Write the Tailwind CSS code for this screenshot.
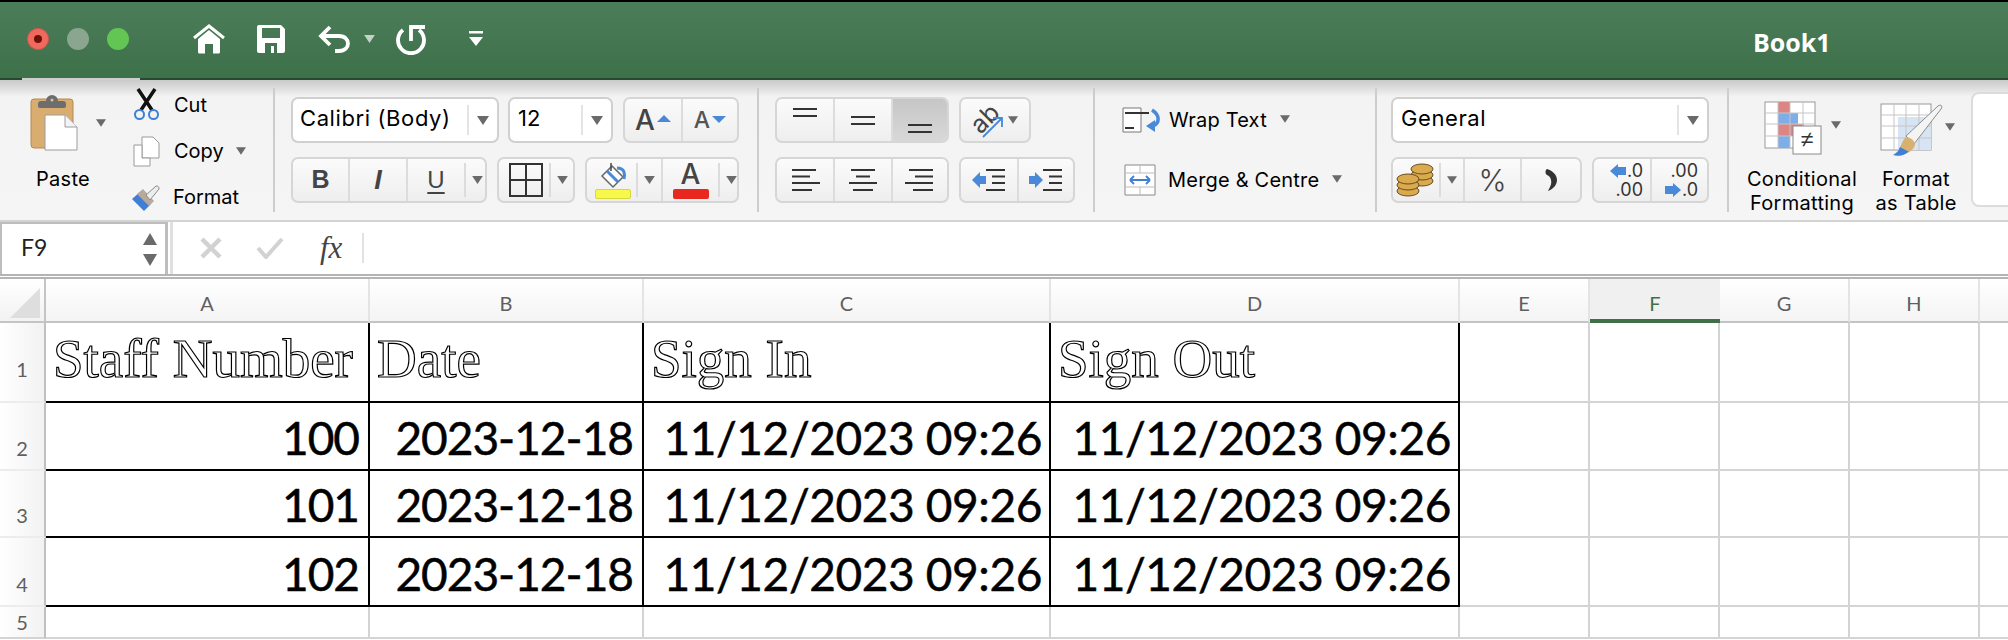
<!DOCTYPE html>
<html lang="en">
<head>
<meta charset="UTF-8">
<title>Book1</title>
<script src="https://cdn.jsdelivr.net/npm/@tailwindcss/browser@4"></script>
</head>
<body class="w-[2008px] h-[640px] overflow-hidden bg-white font-['Inter',sans-serif] text-black">

<svg class="hidden">
  <symbol id="caret" viewBox="0 0 12 9"><polygon points="0,0 12,0 6,9" fill="#6a6a6a"/></symbol>
</svg>

<!-- title bar -->
<div class="h-[80px] bg-black pt-[2px]">
  <div class="relative h-[78px] flex items-center bg-linear-to-b from-[#4c7d5a] to-[#3d7149] border-b-2 border-[#28482f]">
    <div class="flex items-center gap-[18px] ml-[27px] mb-[2px]">
      <span class="w-[22px] h-[22px] rounded-full bg-[#ef6a5e] border border-[#d9534a] flex items-center justify-center"><span class="w-[8px] h-[8px] rounded-full bg-[#6f0f08]"></span></span>
      <span class="w-[22px] h-[22px] rounded-full bg-[#8aa590]"></span>
      <span class="w-[22px] h-[22px] rounded-full bg-[#62c554]"></span>
    </div>
    <div class="flex items-center ml-[63px] mb-[2px]">
      <svg class="w-[34px] h-[30px]" viewBox="0 0 34 30"><polyline points="2,14 17,2 32,14" fill="none" stroke="#fff" stroke-width="3"/><path d="M6 15 L17 6 L28 15 V28 a1.500 1.500 0 0 1 -1.500 1.500 H21 V20 H13 V29.500 H7.500 A1.500 1.500 0 0 1 6 28 Z" fill="#fff"/></svg>
      <svg class="w-[28px] h-[28px] ml-[31px]" viewBox="0 0 28 28"><path d="M2 0 H24 L28 4 V26 a2 2 0 0 1 -2 2 H2 a2 2 0 0 1 -2 -2 V2 a2 2 0 0 1 2 -2 Z M5 3 V13 H23 V3 Z M8 28 H20 V18 H8 Z" fill="#fff" fill-rule="evenodd"/><rect x="14" y="21" width="3" height="7" fill="#fff"/></svg>
      <svg class="w-[32px] h-[28px] ml-[33px]" viewBox="0 0 32 28"><path d="M12 2 L3 11 L12 20 M3 11 H21 C33 11 33 26 21 26 H17" fill="none" stroke="#fff" stroke-width="3.800"/></svg>
      <svg class="w-[11px] h-[8px] ml-[14px]" viewBox="0 0 12 9"><polygon points="0,0 12,0 6,9" fill="#c3d2c8"/></svg>
      <svg class="w-[32px] h-[32px] ml-[20px]" viewBox="0 0 32 32"><path d="M8 7 A13 13 0 1 0 24 7" fill="none" stroke="#fff" stroke-width="3.800"/><path d="M16 18 V4 H30" fill="none" stroke="#fff" stroke-width="3.800"/></svg>
      <svg class="w-[16px] h-[16px] ml-[41px]" viewBox="0 0 16 16"><rect x="1" y="0" width="14" height="2.500" fill="#fff"/><polygon points="1,6 15,6 8,15" fill="#fff"/></svg>
    </div>
    <div class="absolute left-[1753px] top-[26px] text-[25px] leading-[28px] font-bold text-white font-['Open_Sans',sans-serif]">Book1</div>
    <div class="absolute left-[22px] -bottom-[2px] w-[118px] h-[2px] bg-[#cfcfcf]"></div>
  </div>
</div>

<!-- ribbon -->
<div class="h-[140px] flex bg-linear-to-b from-[#c9c9c9] via-[#f3f3f3] via-[12%] to-[#f5f5f5] text-[20px] overflow-hidden">
  <!-- clipboard -->
  <div class="w-[273px] flex">
    <div class="w-[128px] pl-[30px] pt-[13px]">
      <div class="flex items-center">
        <svg class="w-[48px] h-[58px]" viewBox="0 0 48 58"><rect x="1" y="6" width="42" height="49" rx="3" fill="#d9ad70" stroke="#b58a50"/><path d="M8 11 a3 3 0 0 1 3 -3 h5 a6 6 0 0 1 12 0 h5 a3 3 0 0 1 3 3 v2 a2 2 0 0 1 -2 2 H10 a2 2 0 0 1 -2 -2 Z" fill="#6d6d6d"/><circle cx="22" cy="7" r="1.500" fill="#e6c088"/><path d="M15 22 H35 L47 34 V57 H15 Z" fill="#fff" stroke="#9c9c9c"/><path d="M35 22 V34 H47" fill="#f3f3f3" stroke="#9c9c9c"/></svg>
        <svg class="w-[10px] h-[8px] ml-[18px] mt-[2px]"><use href="#caret"/></svg>
      </div>
      <div class="mt-[16px] ml-[6px] leading-[24px] tracking-[0.3px]">Paste</div>
    </div>
    <div class="flex flex-col pt-[8px] ml-[5px]">
      <div class="h-[33px] flex items-center mb-[7px]">
        <svg class="w-[27px] h-[33px]" viewBox="0 0 27 33"><path d="M5 1 L19 22 M22 1 L8 22" stroke="#111" stroke-width="3.500" fill="none"/><circle cx="6.500" cy="26.500" r="4.500" fill="none" stroke="#3f7fd6" stroke-width="2"/><circle cx="20.500" cy="26.500" r="4.500" fill="none" stroke="#3f7fd6" stroke-width="2"/></svg>
        <span class="ml-[14px]">Cut</span>
      </div>
      <div class="h-[46px] flex items-center">
        <svg class="w-[27px] h-[31px]" viewBox="0 0 27 31"><path d="M9 1 H20 L26 7 V22 H9 Z" fill="#fff" stroke="#9a9a9a"/><path d="M1 9 H9 V22 H17 V30 H1 Z" fill="#fff" stroke="#9a9a9a"/></svg>
        <span class="ml-[14px]">Copy</span>
        <svg class="w-[10px] h-[8px] ml-[12px]"><use href="#caret"/></svg>
      </div>
      <div class="h-[46px] flex items-center -ml-[3px]">
        <svg class="w-[32px] h-[30px]" viewBox="0 0 32 30"><path d="M2 17 L14 29 L21 22 L10 10 Z" fill="#3f7fd6"/><path d="M7 12 L19 24 L24 19 L13 7 Z" fill="#b7aa9a"/><path d="M16 13 L26 4 a2.500 2.500 0 0 1 3 3 L20 18 Z" fill="#ededed" stroke="#8a8a8a"/></svg>
        <span class="ml-[11px]">Format</span>
      </div>
    </div>
  </div>
  <div class="w-[2px] h-[124px] mt-[8px] bg-[#cdcdcd]"></div>

  <!-- font -->
  <div class="w-[482px] pl-[16px] pt-[17px] flex flex-col gap-[14px]">
    <div class="flex h-[46px]">
      <div class="w-[208px] bg-white border-2 border-[#d0d0d0] rounded-[7px] flex items-center pl-[7px] text-[22px] tracking-[0.6px]">
        <span class="flex-1 whitespace-nowrap mb-[3px]">Calibri (Body)</span>
        <span class="w-[2px] h-[30px] bg-[#e4e4e4]"></span>
        <svg class="w-[12px] h-[9px] mx-[8px]"><use href="#caret"/></svg>
      </div>
      <div class="w-[105px] ml-[9px] bg-white border-2 border-[#d0d0d0] rounded-[7px] flex items-center pl-[8px] text-[22px]">
        <span class="flex-1 mb-[3px]">12</span>
        <span class="w-[2px] h-[30px] bg-[#e4e4e4]"></span>
        <svg class="w-[12px] h-[9px] mx-[8px]"><use href="#caret"/></svg>
      </div>
      <div class="w-[116px] ml-[10px] border-2 border-[#d6d6d6] rounded-[7px] bg-linear-to-b from-[#fbfbfb] to-[#eeeeee] flex">
        <div class="w-[58px] border-r-2 border-[#dcdcdc] flex items-center justify-center gap-[2px] text-[#444]"><span class="text-[28px] font-medium">A</span><svg class="w-[14px] h-[7px] mb-[4px]" viewBox="0 0 14 7"><polygon points="7,0 14,7 0,7" fill="#4a88d8"/></svg></div>
        <div class="flex-1 flex items-center justify-center gap-[2px] text-[#555]"><span class="text-[23px] font-medium">A</span><svg class="w-[14px] h-[7px] mb-[2px]" viewBox="0 0 14 7"><polygon points="0,0 14,0 7,7" fill="#4a88d8"/></svg></div>
      </div>
    </div>
    <div class="flex h-[46px]">
      <div class="w-[196px] border-2 border-[#d6d6d6] rounded-[7px] bg-linear-to-b from-[#fbfbfb] to-[#eeeeee] flex items-center text-[#444]">
        <div class="w-[57px] h-full border-r-2 border-[#dcdcdc] flex items-center justify-center text-[25px] font-bold font-['Liberation_Sans',sans-serif]">B</div>
        <div class="w-[58px] h-full border-r-2 border-[#dcdcdc] flex items-center justify-center text-[27px] italic font-['Liberation_Sans',sans-serif] font-semibold">I</div>
        <div class="w-[56px] flex items-center justify-center text-[24px] underline underline-offset-[4px] font-['Liberation_Sans',sans-serif]">U</div>
        <span class="w-[2px] h-[34px] bg-[#dcdcdc]"></span>
        <svg class="w-[11px] h-[8px] ml-[6px]"><use href="#caret"/></svg>
      </div>
      <div class="w-[78px] ml-[10px] border-2 border-[#d6d6d6] rounded-[7px] bg-linear-to-b from-[#fbfbfb] to-[#eeeeee] flex items-center">
        <svg class="w-[34px] h-[34px] ml-[10px]" viewBox="0 0 34 34"><path d="M1 1 H33 V33 H1 Z M17 1 V33 M1 17 H33" fill="none" stroke="#333" stroke-width="2"/></svg>
        <span class="w-[2px] h-[34px] ml-[6px] bg-[#dcdcdc]"></span>
        <svg class="w-[11px] h-[8px] ml-[6px]"><use href="#caret"/></svg>
      </div>
      <div class="w-[154px] ml-[10px] border-2 border-[#d6d6d6] rounded-[7px] bg-linear-to-b from-[#fbfbfb] to-[#eeeeee] flex items-center">
        <div class="w-[48px] pl-[3px] flex flex-col items-center">
          <svg class="w-[28px] h-[27px]" viewBox="0 0 28 27"><path d="M13 4 L24 15 L14 25 L3 14 Z" fill="#fff" stroke="#666" stroke-width="1.500"/><path d="M8 9 L19 20" stroke="#4a88d8" stroke-width="3"/><path d="M12 1 V9" stroke="#444" stroke-width="1.500"/><path d="M18 6 C26 6 26 12 25 17" fill="none" stroke="#4a88d8" stroke-width="3"/></svg>
          <span class="w-[36px] h-[10px] bg-[#f8f84a] border border-[#d8d83c] rounded-[2px]"></span>
        </div>
        <span class="w-[2px] h-[34px] ml-[1px] bg-[#dcdcdc]"></span>
        <svg class="w-[11px] h-[8px] ml-[6px]"><use href="#caret"/></svg>
        <span class="w-[2px] h-full ml-[6px] bg-[#dcdcdc]"></span>
        <div class="w-[55px] flex flex-col items-center">
          <span class="text-[28px] leading-[25px] text-[#444] font-medium">A</span>
          <span class="w-[36px] h-[10px] mt-[2px] bg-[#e8281e] rounded-[2px]"></span>
        </div>
        <span class="w-[2px] h-[34px] bg-[#dcdcdc]"></span>
        <svg class="w-[11px] h-[8px] ml-[6px]"><use href="#caret"/></svg>
      </div>
    </div>
  </div>
  <div class="w-[2px] h-[124px] mt-[8px] bg-[#cdcdcd]"></div>

  <!-- alignment -->
  <div class="w-[334px] pl-[16px] pt-[17px] flex">
    <div class="flex flex-col gap-[14px]">
      <div class="flex h-[46px]">
        <div class="w-[174px] border-2 border-[#d6d6d6] rounded-[7px] bg-linear-to-b from-[#fbfbfb] to-[#eeeeee] flex overflow-hidden">
          <div class="w-[58px] border-r-2 border-[#dcdcdc] pt-[9px] flex justify-center"><svg class="w-[24px] h-[9px]" viewBox="0 0 24 9"><path d="M0 1 H24 M0 8 H24" stroke="#333" stroke-width="2"/></svg></div>
          <div class="w-[58px] border-r-2 border-[#dcdcdc] flex items-center justify-center"><svg class="w-[24px] h-[9px]" viewBox="0 0 24 9"><path d="M0 1 H24 M0 8 H24" stroke="#333" stroke-width="2"/></svg></div>
          <div class="flex-1 bg-linear-to-b from-[#c6c6c6] to-[#d8d8d8] pt-[25px] flex justify-center"><svg class="w-[24px] h-[9px]" viewBox="0 0 24 9"><path d="M0 1 H24 M0 8 H24" stroke="#333" stroke-width="2"/></svg></div>
        </div>
        <div class="relative w-[72px] ml-[10px] border-2 border-[#d6d6d6] rounded-[7px] bg-linear-to-b from-[#fbfbfb] to-[#eeeeee] flex items-center">
          <span class="w-[38px] ml-[9px] text-[25px] leading-[25px] text-[#444] -rotate-45 -translate-y-[5px] -translate-x-[1px]">ab</span>
          <svg class="absolute left-[21px] top-[17px] w-[22px] h-[22px]" viewBox="0 0 22 22"><path d="M1 21 L20 2 M11 2 H20 V11" fill="none" stroke="#4a88d8" stroke-width="1.800"/></svg>
          <svg class="w-[10px] h-[8px] ml-[0px]"><use href="#caret"/></svg>
        </div>
      </div>
      <div class="flex h-[46px]">
        <div class="w-[174px] border-2 border-[#d6d6d6] rounded-[7px] bg-linear-to-b from-[#fbfbfb] to-[#eeeeee] flex">
          <div class="w-[58px] border-r-2 border-[#dcdcdc] flex items-center justify-center"><svg class="w-[30px] h-[24px]" viewBox="0 0 30 24"><path d="M2 2 H26 M2 8.500 H20 M2 15 H30 M2 22 H22" stroke="#333" stroke-width="2"/></svg></div>
          <div class="w-[58px] border-r-2 border-[#dcdcdc] flex items-center justify-center"><svg class="w-[30px] h-[24px]" viewBox="0 0 30 24"><path d="M3 2 H27 M8 8.500 H22 M1 15 H29 M5 22 H25" stroke="#333" stroke-width="2"/></svg></div>
          <div class="flex-1 flex items-center justify-center"><svg class="w-[30px] h-[24px]" viewBox="0 0 30 24"><path d="M4 2 H28 M10 8.500 H28 M0 15 H28 M8 22 H28" stroke="#333" stroke-width="2"/></svg></div>
        </div>
        <div class="w-[116px] ml-[10px] border-2 border-[#d6d6d6] rounded-[7px] bg-linear-to-b from-[#fbfbfb] to-[#eeeeee] flex">
          <div class="w-[58px] border-r-2 border-[#dcdcdc] flex items-center justify-center"><svg class="w-[34px] h-[24px]" viewBox="0 0 34 24"><polygon points="0,12 8,4 8,8 14,8 14,16 8,16 8,20" fill="#4a88d8"/><path d="M14 2 H33 M20 8.500 H33 M20 15 H33 M14 22 H33" stroke="#333" stroke-width="2"/></svg></div>
          <div class="flex-1 flex items-center justify-center"><svg class="w-[34px] h-[24px]" viewBox="0 0 34 24"><polygon points="14,12 6,4 6,8 0,8 0,16 6,16 6,20" fill="#4a88d8"/><path d="M14 2 H33 M20 8.500 H33 M20 15 H33 M14 22 H33" stroke="#333" stroke-width="2"/></svg></div>
        </div>
      </div>
    </div>
  </div>
  <div class="w-[2px] h-[124px] mt-[8px] bg-[#cdcdcd]"></div>

  <!-- wrap and merge -->
  <div class="w-[280px] pt-[17px] pl-[27px] flex flex-col gap-[14px]">
    <div class="h-[46px] flex items-center">
      <svg class="w-[40px] h-[26px]" viewBox="0 0 40 26"><path d="M1 1 H19 V25 H1 Z" fill="#fff" stroke="#777"/><path d="M3 6 H27 M3 21 H12" stroke="#333" stroke-width="2"/><path d="M30 3 C38 8 38 16 31 19" fill="none" stroke="#4a88d8" stroke-width="3.500"/><polygon points="24,19 33,13 33,25" fill="#4a88d8"/></svg>
      <span class="ml-[7px] tracking-[0.2px]">Wrap Text</span>
      <svg class="w-[10px] h-[8px] ml-[13px] -mt-[3px]"><use href="#caret"/></svg>
    </div>
    <div class="h-[46px] flex items-center">
      <svg class="w-[32px] h-[32px] ml-[2px]" viewBox="0 0 32 32"><path d="M1 1 H31 V31 H1 Z" fill="#fff" stroke="#888"/><path d="M1 9 H31 M1 23 H31 M16 1 V9 M16 23 V31" stroke="#bbb"/><path d="M6 16 H26 M6 16 L10 12 M6 16 L10 20 M26 16 L22 12 M26 16 L22 20" fill="none" stroke="#3f7fd6" stroke-width="1.800"/></svg>
      <span class="ml-[12px] tracking-[0.2px] whitespace-nowrap">Merge &amp; Centre</span>
      <svg class="w-[10px] h-[8px] ml-[13px] -mt-[2px]"><use href="#caret"/></svg>
    </div>
  </div>
  <div class="w-[2px] h-[124px] mt-[8px] bg-[#cdcdcd]"></div>

  <!-- number -->
  <div class="w-[350px] pl-[14px] pt-[17px] flex flex-col gap-[14px]">
    <div class="w-[318px] h-[46px] bg-white border-2 border-[#d0d0d0] rounded-[7px] flex items-center pl-[8px] text-[22px] tracking-[0.6px]">
      <span class="flex-1 mb-[3px]">General</span>
      <span class="w-[2px] h-[30px] bg-[#e4e4e4]"></span>
      <svg class="w-[12px] h-[9px] mx-[8px]"><use href="#caret"/></svg>
    </div>
    <div class="flex h-[46px]">
      <div class="w-[191px] border-2 border-[#d6d6d6] rounded-[7px] bg-linear-to-b from-[#fbfbfb] to-[#eeeeee] flex items-center">
        <svg class="w-[38px] h-[36px] ml-[3px]" viewBox="0 0 38 36"><g fill="#d9ab4e" stroke="#6b4a20"><ellipse cx="26" cy="19" rx="11" ry="5"/><ellipse cx="26" cy="13" rx="11" ry="5"/><ellipse cx="26" cy="7" rx="11" ry="5"/><ellipse cx="12" cy="29" rx="11" ry="5"/><ellipse cx="12" cy="23" rx="11" ry="5"/><ellipse cx="12" cy="17" rx="11" ry="5"/></g></svg>
        <span class="w-[2px] h-[34px] ml-[5px] bg-[#dcdcdc]"></span>
        <svg class="w-[10px] h-[8px] ml-[6px]"><use href="#caret"/></svg>
        <span class="w-[2px] h-full ml-[6px] bg-[#dcdcdc]"></span>
        <div class="w-[57px] h-full border-r-2 border-[#dcdcdc] flex items-center justify-center text-[30px] font-light text-[#444]">%</div>
        <div class="flex-1 flex items-center justify-center"><svg class="w-[12px] h-[24px]" viewBox="0 0 12 24"><path d="M2 1 C8 3 12 7 12 12 C12 17 8 21 3 23 C5 19 7 16 6 12 C5.500 9 4 8 2 7 C0 6 0 2 2 1 Z" fill="#333"/></svg></div>
      </div>
      <div class="w-[117px] ml-[10px] border-2 border-[#d6d6d6] rounded-[7px] bg-linear-to-b from-[#fbfbfb] to-[#eeeeee] flex text-[18px] leading-[19px] text-[#333]">
        <div class="w-[58px] border-r-2 border-[#dcdcdc] flex flex-col items-end justify-center pr-[7px]">
          <div class="flex items-center"><svg class="w-[16px] h-[14px] mr-[1px]" viewBox="0 0 16 14"><polygon points="0,7 8,0 8,3 16,3 16,11 8,11 8,14" fill="#4a88d8"/></svg>.0</div>
          <div>.00</div>
        </div>
        <div class="flex-1 flex flex-col items-end justify-center pr-[9px]">
          <div>.00</div>
          <div class="flex items-center"><svg class="w-[16px] h-[14px] mr-[1px]" viewBox="0 0 16 14"><polygon points="16,7 8,0 8,3 0,3 0,11 8,11 8,14" fill="#4a88d8"/></svg>.0</div>
        </div>
      </div>
    </div>
  </div>
  <div class="w-[2px] h-[124px] mt-[8px] bg-[#cdcdcd]"></div>

  <!-- styles -->
  <div class="flex-1 flex relative">
    <div class="w-[146px] pt-[21px] flex flex-col items-center">
      <div class="flex items-center">
        <svg class="w-[58px] h-[54px]" viewBox="0 0 58 54"><rect x="1" y="1" width="50" height="46" fill="#fff" stroke="#999"/><rect x="14" y="1" width="12" height="11" fill="#dc8585"/><rect x="14" y="12" width="20" height="11" fill="#7eaee8"/><rect x="14" y="23" width="26" height="12" fill="#dc8585"/><rect x="14" y="35" width="12" height="12" fill="#7eaee8"/><path d="M1 12 H51 M1 23 H51 M1 35 H51 M14 1 V47 M26 1 V47 M39 1 V47" stroke="#c5c5c5" fill="none"/><rect x="29" y="25" width="28" height="28" fill="#fff" stroke="#8a8a8a"/><text x="43" y="46" font-size="23" text-anchor="middle" fill="#333" font-family="Liberation Sans">≠</text></svg>
        <svg class="w-[10px] h-[8px] ml-[9px] -mt-[6px]"><use href="#caret"/></svg>
      </div>
      <div class="mt-[12px] text-center leading-[24px] tracking-[0.3px] whitespace-nowrap">Conditional<br>Formatting</div>
    </div>
    <div class="w-[82px] pt-[23px] flex flex-col items-center">
      <div class="flex items-center ml-[3px]">
        <svg class="w-[64px] h-[54px]" viewBox="0 0 64 54"><rect x="1" y="1" width="50" height="46" fill="#fff" stroke="#999"/><rect x="18" y="14" width="33" height="33" fill="#d7e4f3"/><path d="M1 12 H51 M1 23 H51 M1 35 H51 M14 1 V47 M26 1 V47 M39 1 V47" stroke="#c5c5c5" fill="none"/><path d="M26 33 L58 3 C61 1 63 3 61 6 L34 41 Z" fill="#f4f4f4" stroke="#8c8c8c"/><path d="M14 52 C19 50 20 43 24 36 C28 32 35 37 35 42 C33 49 22 54 14 52 Z" fill="#d8b070"/><path d="M13 52 C17 50 19 47 20 44 C24 46 28 49 29 48 C25 52 20 54 13 52 Z" fill="#3f7fd6"/></svg>
        <svg class="w-[10px] h-[8px] ml-[1px] -mt-[6px] shrink-0"><use href="#caret"/></svg>
      </div>
      <div class="mt-[10px] text-center leading-[24px] tracking-[0.3px] whitespace-nowrap">Format<br>as Table</div>
    </div>
    <div class="absolute left-[242px] top-[12px] w-[60px] h-[115px] bg-white border-2 border-[#dcdcdc] rounded-l-[8px]"></div>
  </div>
</div>

<!-- formula bar -->
<div class="h-[59px] border-t-2 border-[#d3d3d3] bg-white flex flex-col">
  <div class="h-[52px] flex">
    <div class="w-[168px] border-t-2 border-r-[3px] border-l-2 border-[#bdbdbd] flex items-center pl-[19px] text-[23px] text-[#222] font-['Lato',sans-serif]">
      <span class="flex-1 mb-[3px]">F9</span>
      <div class="flex flex-col gap-[9px] mr-[8px]">
        <svg class="w-[14px] h-[12px]" viewBox="0 0 14 12"><polygon points="7,0 14,12 0,12" fill="#6a6a6a"/></svg>
        <svg class="w-[14px] h-[12px]" viewBox="0 0 14 12"><polygon points="0,0 14,0 7,12" fill="#6a6a6a"/></svg>
      </div>
    </div>
    <div class="w-[3px] ml-[2px] bg-[#e0e0e0]"></div>
    <div class="flex items-center flex-1">
      <svg class="w-[22px] h-[22px] ml-[27px]" viewBox="0 0 22 22"><path d="M2 2 L20 20 M20 2 L2 20" stroke="#d2d2d2" stroke-width="4.500"/></svg>
      <svg class="w-[28px] h-[22px] ml-[34px]" viewBox="0 0 28 22"><path d="M2 11 L10 20 L26 2" fill="none" stroke="#d2d2d2" stroke-width="4"/></svg>
      <span class="ml-[36px] text-[31px] italic text-[#444] font-['Liberation_Serif',serif]">fx</span>
      <span class="w-[2px] h-[30px] ml-[20px] bg-[#e2e2e2]"></span>
    </div>
  </div>
  <div class="h-[5px] border-y-2 border-y-[#b4b4b4] "></div>
</div>

<!-- sheet -->
<div class="grid grid-cols-[46px_324px_274px_407px_409px_130px_130px_130px_130px_28px] grid-rows-[44px_80px_68px_67px_69px_32px] font-['Lato',sans-serif]">
  <!-- column headers -->
  <div class="relative border-r-2 border-b-2 border-[#c4c4c4] bg-linear-to-b from-white to-[#f2f2f2]"><div class="absolute left-[10px] top-[9px] w-[30px] h-[30px] bg-[#dedede] [clip-path:polygon(100%_0,100%_100%,0_100%)]"></div></div>
  <div class="border-r-2 border-b-2 border-r-[#e4e4e4] border-b-[#c4c4c4] bg-linear-to-b from-white to-[#f4f4f4] flex items-center justify-center pt-[5px] text-[20px] text-[#5f5f5f]">A</div>
  <div class="border-r-2 border-b-2 border-r-[#e4e4e4] border-b-[#c4c4c4] bg-linear-to-b from-white to-[#f4f4f4] flex items-center justify-center pt-[5px] text-[20px] text-[#5f5f5f]">B</div>
  <div class="border-r-2 border-b-2 border-r-[#e4e4e4] border-b-[#c4c4c4] bg-linear-to-b from-white to-[#f4f4f4] flex items-center justify-center pt-[5px] text-[20px] text-[#5f5f5f]">C</div>
  <div class="border-r-2 border-b-2 border-r-[#e4e4e4] border-b-[#c4c4c4] bg-linear-to-b from-white to-[#f4f4f4] flex items-center justify-center pt-[5px] text-[20px] text-[#5f5f5f]">D</div>
  <div class="border-r-2 border-b-2 border-r-[#e4e4e4] border-b-[#c4c4c4] bg-linear-to-b from-white to-[#f4f4f4] flex items-center justify-center pt-[5px] text-[20px] text-[#5f5f5f]">E</div>
  <div class="border-b-4 border-b-[#3f7049] bg-[#f0f0f0] flex items-center justify-center pt-[7px] text-[20px] text-[#3f7049]">F</div>
  <div class="border-r-2 border-b-2 border-r-[#e4e4e4] border-b-[#c4c4c4] bg-linear-to-b from-white to-[#f4f4f4] flex items-center justify-center pt-[5px] text-[20px] text-[#5f5f5f]">G</div>
  <div class="border-r-2 border-b-2 border-r-[#e4e4e4] border-b-[#c4c4c4] bg-linear-to-b from-white to-[#f4f4f4] flex items-center justify-center pt-[5px] text-[20px] text-[#5f5f5f]">H</div>
  <div class="border-b-2 border-b-[#c4c4c4] bg-linear-to-b from-white to-[#f4f4f4]"></div>

  <!-- row 1 -->
  <div class="border-r-2 border-r-[#c0c0c0] border-b-2 border-b-[#ececec] bg-linear-to-r from-white to-[#f2f2f2] flex items-end justify-center pb-[21px] text-[20px] leading-[22px] text-[#5f5f5f]">1</div>
  <div class="border-r-2 border-b-2 border-black flex items-end pl-[7px] pb-[9px] font-['Liberation_Serif',serif] text-[55px] leading-[66px] whitespace-nowrap text-white [-webkit-text-stroke:1.200px_#000]">Staff Number</div>
  <div class="border-r-2 border-b-2 border-black flex items-end pl-[7px] pb-[9px] font-['Liberation_Serif',serif] text-[55px] leading-[66px] whitespace-nowrap text-white [-webkit-text-stroke:1.200px_#000]">Date</div>
  <div class="border-r-2 border-b-2 border-black flex items-end pl-[7px] pb-[9px] font-['Liberation_Serif',serif] text-[55px] leading-[66px] whitespace-nowrap text-white [-webkit-text-stroke:1.200px_#000]">Sign In</div>
  <div class="border-r-2 border-b-2 border-black flex items-end pl-[7px] pb-[9px] font-['Liberation_Serif',serif] text-[55px] leading-[66px] whitespace-nowrap text-white [-webkit-text-stroke:1.200px_#000]">Sign Out</div>
  <div class="border-r-2 border-b-2 border-[#d4d4d4]"></div><div class="border-r-2 border-b-2 border-[#d4d4d4]"></div><div class="border-r-2 border-b-2 border-[#d4d4d4]"></div><div class="border-r-2 border-b-2 border-[#d4d4d4]"></div><div class="border-b-2 border-[#d4d4d4]"></div>

  <!-- row 2 -->
  <div class="border-r-2 border-r-[#c0c0c0] border-b-2 border-b-[#ececec] bg-linear-to-r from-white to-[#f2f2f2] flex items-end justify-center pb-[10px] text-[20px] leading-[22px] text-[#5f5f5f]">2</div>
  <div class="border-r-2 border-b-2 border-black flex items-end justify-end pr-[9px] pb-[3px] text-[46px] leading-[56px] tracking-[-1px] whitespace-nowrap [-webkit-text-stroke:0.500px_#000]">100</div>
  <div class="border-r-2 border-b-2 border-black flex items-end justify-end pr-[9px] pb-[3px] text-[46px] leading-[56px] tracking-[-1px] whitespace-nowrap [-webkit-text-stroke:0.500px_#000]">2023-12-18</div>
  <div class="border-r-2 border-b-2 border-black flex items-end justify-end pr-[7px] pb-[3px] text-[46px] leading-[56px] tracking-[-0.400px] whitespace-nowrap [-webkit-text-stroke:0.500px_#000]">11/12/2023 09:26</div>
  <div class="border-r-2 border-b-2 border-black flex items-end justify-end pr-[7px] pb-[3px] text-[46px] leading-[56px] tracking-[-0.400px] whitespace-nowrap [-webkit-text-stroke:0.500px_#000]">11/12/2023 09:26</div>
  <div class="border-r-2 border-b-2 border-[#d4d4d4]"></div><div class="border-r-2 border-b-2 border-[#d4d4d4]"></div><div class="border-r-2 border-b-2 border-[#d4d4d4]"></div><div class="border-r-2 border-b-2 border-[#d4d4d4]"></div><div class="border-b-2 border-[#d4d4d4]"></div>

  <!-- row 3 -->
  <div class="border-r-2 border-r-[#c0c0c0] border-b-2 border-b-[#ececec] bg-linear-to-r from-white to-[#f2f2f2] flex items-end justify-center pb-[10px] text-[20px] leading-[22px] text-[#5f5f5f]">3</div>
  <div class="border-r-2 border-b-2 border-black flex items-end justify-end pr-[9px] pb-[3px] text-[46px] leading-[56px] tracking-[-1px] whitespace-nowrap [-webkit-text-stroke:0.500px_#000]">101</div>
  <div class="border-r-2 border-b-2 border-black flex items-end justify-end pr-[9px] pb-[3px] text-[46px] leading-[56px] tracking-[-1px] whitespace-nowrap [-webkit-text-stroke:0.500px_#000]">2023-12-18</div>
  <div class="border-r-2 border-b-2 border-black flex items-end justify-end pr-[7px] pb-[3px] text-[46px] leading-[56px] tracking-[-0.400px] whitespace-nowrap [-webkit-text-stroke:0.500px_#000]">11/12/2023 09:26</div>
  <div class="border-r-2 border-b-2 border-black flex items-end justify-end pr-[7px] pb-[3px] text-[46px] leading-[56px] tracking-[-0.400px] whitespace-nowrap [-webkit-text-stroke:0.500px_#000]">11/12/2023 09:26</div>
  <div class="border-r-2 border-b-2 border-[#d4d4d4]"></div><div class="border-r-2 border-b-2 border-[#d4d4d4]"></div><div class="border-r-2 border-b-2 border-[#d4d4d4]"></div><div class="border-r-2 border-b-2 border-[#d4d4d4]"></div><div class="border-b-2 border-[#d4d4d4]"></div>

  <!-- row 4 -->
  <div class="border-r-2 border-r-[#c0c0c0] border-b-2 border-b-[#ececec] bg-linear-to-r from-white to-[#f2f2f2] flex items-end justify-center pb-[10px] text-[20px] leading-[22px] text-[#5f5f5f]">4</div>
  <div class="border-r-2 border-b-2 border-black flex items-end justify-end pr-[9px] pb-[3px] text-[46px] leading-[56px] tracking-[-1px] whitespace-nowrap [-webkit-text-stroke:0.500px_#000]">102</div>
  <div class="border-r-2 border-b-2 border-black flex items-end justify-end pr-[9px] pb-[3px] text-[46px] leading-[56px] tracking-[-1px] whitespace-nowrap [-webkit-text-stroke:0.500px_#000]">2023-12-18</div>
  <div class="border-r-2 border-b-2 border-black flex items-end justify-end pr-[7px] pb-[3px] text-[46px] leading-[56px] tracking-[-0.400px] whitespace-nowrap [-webkit-text-stroke:0.500px_#000]">11/12/2023 09:26</div>
  <div class="border-r-2 border-b-2 border-black flex items-end justify-end pr-[7px] pb-[3px] text-[46px] leading-[56px] tracking-[-0.400px] whitespace-nowrap [-webkit-text-stroke:0.500px_#000]">11/12/2023 09:26</div>
  <div class="border-r-2 border-b-2 border-[#d4d4d4]"></div><div class="border-r-2 border-b-2 border-[#d4d4d4]"></div><div class="border-r-2 border-b-2 border-[#d4d4d4]"></div><div class="border-r-2 border-b-2 border-[#d4d4d4]"></div><div class="border-b-2 border-[#d4d4d4]"></div>

  <!-- row 5 -->
  <div class="border-r-2 border-r-[#c0c0c0] border-b-2 border-b-[#d4d4d4] bg-linear-to-r from-white to-[#f2f2f2] flex items-center justify-center text-[20px] leading-[22px] text-[#5f5f5f]">5</div>
  <div class="border-r-2 border-b-2 border-[#d4d4d4]"></div><div class="border-r-2 border-b-2 border-[#d4d4d4]"></div><div class="border-r-2 border-b-2 border-[#d4d4d4]"></div><div class="border-r-2 border-b-2 border-[#d4d4d4]"></div><div class="border-r-2 border-b-2 border-[#d4d4d4]"></div><div class="border-r-2 border-b-2 border-[#d4d4d4]"></div><div class="border-r-2 border-b-2 border-[#d4d4d4]"></div><div class="border-r-2 border-b-2 border-[#d4d4d4]"></div><div class="border-b-2 border-[#d4d4d4]"></div>
</div>

</body>
</html>
